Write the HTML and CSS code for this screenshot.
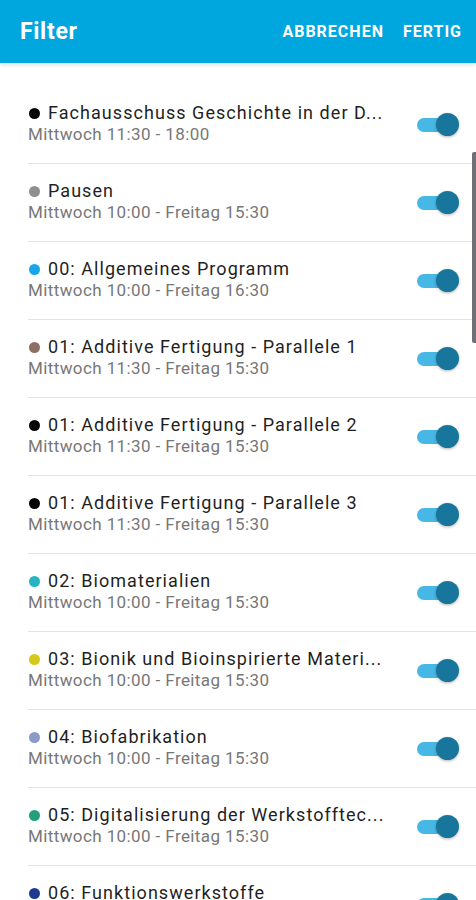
FILE: index.html
```html
<!DOCTYPE html>
<html lang="de">

<head>
    <meta charset="UTF-8" />
    <meta name="viewport" content="width=device-width, initial-scale=1.0" />
    <title>Filter</title>
    <link rel="stylesheet" href="styles.css">
</head>

<body>
    <header class="app-bar">
        <h1 class="app-title">Filter</h1>
        <div class="app-actions">
            <button class="action-btn">ABBRECHEN</button>
            <button class="action-btn">FERTIG</button>
        </div>
    </header>

    <ul class="filter-list">
        <li class="filter-row">
            <div class="filter-text">
                <div class="filter-title"><span class="dot dot-black"></span>Fachausschuss Geschichte in der D...</div>
                <div class="filter-time">Mittwoch 11:30 - 18:00</div>
            </div>
            <span class="switch"></span>
        </li>
        <li class="filter-row">
            <div class="filter-text">
                <div class="filter-title"><span class="dot dot-grey"></span>Pausen</div>
                <div class="filter-time">Mittwoch 10:00 - Freitag 15:30</div>
            </div>
            <span class="switch"></span>
        </li>
        <li class="filter-row">
            <div class="filter-text">
                <div class="filter-title"><span class="dot dot-blue"></span>00: Allgemeines Programm</div>
                <div class="filter-time">Mittwoch 10:00 - Freitag 16:30</div>
            </div>
            <span class="switch"></span>
        </li>
        <li class="filter-row">
            <div class="filter-text">
                <div class="filter-title"><span class="dot dot-brown"></span>01: Additive Fertigung - Parallele 1</div>
                <div class="filter-time">Mittwoch 11:30 - Freitag 15:30</div>
            </div>
            <span class="switch"></span>
        </li>
        <li class="filter-row">
            <div class="filter-text">
                <div class="filter-title"><span class="dot dot-black"></span>01: Additive Fertigung - Parallele 2</div>
                <div class="filter-time">Mittwoch 11:30 - Freitag 15:30</div>
            </div>
            <span class="switch"></span>
        </li>
        <li class="filter-row">
            <div class="filter-text">
                <div class="filter-title"><span class="dot dot-black"></span>01: Additive Fertigung - Parallele 3</div>
                <div class="filter-time">Mittwoch 11:30 - Freitag 15:30</div>
            </div>
            <span class="switch"></span>
        </li>
        <li class="filter-row">
            <div class="filter-text">
                <div class="filter-title"><span class="dot dot-teal"></span>02: Biomaterialien</div>
                <div class="filter-time">Mittwoch 10:00 - Freitag 15:30</div>
            </div>
            <span class="switch"></span>
        </li>
        <li class="filter-row">
            <div class="filter-text">
                <div class="filter-title"><span class="dot dot-yellow"></span>03: Bionik und Bioinspirierte Materi...</div>
                <div class="filter-time">Mittwoch 10:00 - Freitag 15:30</div>
            </div>
            <span class="switch"></span>
        </li>
        <li class="filter-row">
            <div class="filter-text">
                <div class="filter-title"><span class="dot dot-lavender"></span>04: Biofabrikation</div>
                <div class="filter-time">Mittwoch 10:00 - Freitag 15:30</div>
            </div>
            <span class="switch"></span>
        </li>
        <li class="filter-row">
            <div class="filter-text">
                <div class="filter-title"><span class="dot dot-green"></span>05: Digitalisierung der Werkstofftec...</div>
                <div class="filter-time">Mittwoch 10:00 - Freitag 15:30</div>
            </div>
            <span class="switch"></span>
        </li>
        <li class="filter-row">
            <div class="filter-text">
                <div class="filter-title"><span class="dot dot-navy"></span>06: Funktionswerkstoffe</div>
                <div class="filter-time">Mittwoch 10:00 - Freitag 15:30</div>
            </div>
            <span class="switch"></span>
        </li>
    </ul>

    <div class="scrollbar"></div>
</body>

</html>
```

FILE: styles.css
```css
body {
    font-family: Roboto, 'Noto Sans', sans-serif;
    margin: 0;
    padding: 0;
    background-color: #fff;
    height: 900px;
    overflow: hidden;
}

/* top bar */
.app-bar {
    position: relative;
    z-index: 2;
    height: 63px;
    background-color: #00a6de;
    display: flex;
    align-items: center;
    justify-content: space-between;
    padding: 0 14px 0 20px;
    box-shadow: 0 2px 4px rgba(0, 0, 0, 0.12);
}

.app-title {
    margin: 0;
    color: #fff;
    font-size: 23px;
    font-weight: 700;
    letter-spacing: 0.7px;
}

.app-actions {
    display: flex;
    gap: 19px;
}

.action-btn {
    background: none;
    border: none;
    padding: 0;
    color: #fff;
    font-family: inherit;
    font-size: 16px;
    font-weight: 700;
    letter-spacing: 1px;
}

/* list */
.filter-list {
    list-style: none;
    margin: 0;
    padding: 23px 0 0 28px;
}

.filter-row {
    height: 77px;
    display: flex;
    align-items: center;
    justify-content: space-between;
    padding-right: 17px;
    border-bottom: 1px solid #e3e3e3;
}

.filter-text {
    padding-bottom: 2px;
}

.filter-title {
    display: flex;
    align-items: center;
    font-size: 18px;
    line-height: 22px;
    letter-spacing: 1.05px;
    color: #1f1f1f;
}

.filter-time {
    font-size: 17px;
    line-height: 21px;
    letter-spacing: 0.4px;
    color: #777;
}

.dot {
    width: 11px;
    height: 11px;
    border-radius: 50%;
    margin: 0 8px 0 1px;
    flex-shrink: 0;
}

.dot-black { background-color: #050505; }
.dot-grey { background-color: #8f8f8f; }
.dot-blue { background-color: #1aa5ea; }
.dot-brown { background-color: #8d6e63; }
.dot-teal { background-color: #25b3c4; }
.dot-yellow { background-color: #d5c81c; }
.dot-lavender { background-color: #8a9bca; }
.dot-green { background-color: #239f7b; }
.dot-navy { background-color: #1b3a8f; }

/* toggle, always on */
.switch {
    position: relative;
    width: 42px;
    height: 24px;
    flex-shrink: 0;
}

.switch::before {
    content: '';
    position: absolute;
    left: 0;
    top: 5px;
    width: 35px;
    height: 14px;
    border-radius: 7px;
    background-color: #47b8e6;
}

.switch::after {
    content: '';
    position: absolute;
    right: 0;
    top: 0;
    width: 23px;
    height: 23px;
    border-radius: 50%;
    background-color: #18759c;
    box-shadow: 0 1px 3px rgba(0, 0, 0, 0.3);
}

.scrollbar {
    position: absolute;
    right: 0;
    top: 152px;
    width: 4px;
    height: 191px;
    border-radius: 2px 0 0 2px;
    background-color: #6f6f76;
}
```
